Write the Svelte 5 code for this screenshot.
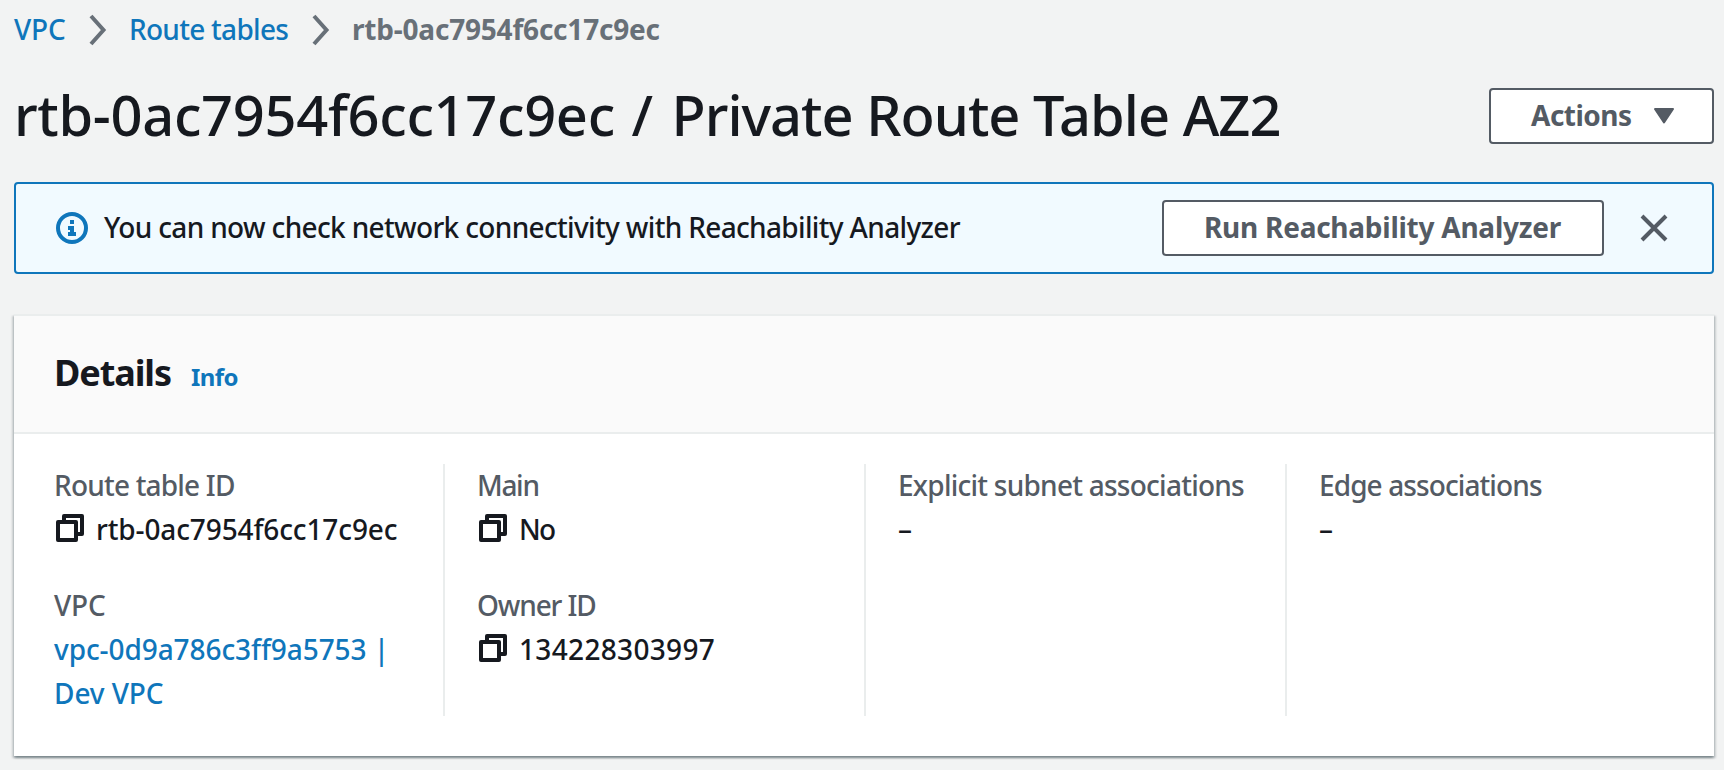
<script>
  const columns = [
    [
      { label: 'Route table ID', labelSpacing: -0.8, value: 'rtb-0ac7954f6cc17c9ec', spacing: -0.12, copy: true },
      { label: 'VPC', labelSpacing: -0.2, value: 'vpc-0d9a786c3ff9a5753 | Dev VPC', spacing: -0.08, link: true }
    ],
    [
      { label: 'Main', labelSpacing: -1.3, value: 'No', spacing: -1.8, copy: true },
      { label: 'Owner ID', labelSpacing: -1.15, value: '134228303997', spacing: 0.33, copy: true }
    ],
    [{ label: 'Explicit subnet associations', labelSpacing: -0.75, value: '–', spacing: 0 }],
    [{ label: 'Edge associations', labelSpacing: -0.9, value: '–', spacing: 0 }]
  ];
</script>

{#snippet chevron()}
  <svg class="chevron" width="18" height="32" viewBox="0 0 18 32" aria-hidden="true">
    <path d="M2 2 L14.5 16 L2 30" fill="none" stroke="#687078" stroke-width="4" />
  </svg>
{/snippet}

<main>
  <nav>
    <a href="#vpc" class="vpc">VPC</a>
    {@render chevron()}
    <a href="#tables" class="tables">Route tables</a>
    {@render chevron()}
    <span class="current">rtb-0ac7954f6cc17c9ec</span>
  </nav>

  <header>
    <h1><span class="id">rtb-0ac7954f6cc17c9ec</span><span class="slash">{' / '}</span><span class="name">Private Route Table AZ2</span></h1>
    <button class="btn actions">
      <span>Actions</span>
      <svg width="22" height="18" viewBox="0 0 22 18" aria-hidden="true">
        <path d="M2 2 H20 L11 15.5 Z" fill="#545b64" stroke="#545b64" stroke-width="2" stroke-linejoin="round" />
      </svg>
    </button>
  </header>

  <section class="alert">
    <svg class="info-icon" width="32" height="32" viewBox="0 0 32 32" aria-hidden="true">
      <circle cx="16" cy="16" r="14" fill="none" stroke="#0f76bb" stroke-width="4" />
      <path d="M14 8 H18 V12 H14 Z M12 14 H18 V20 H20 V24 H12 V20 H14 V18 H12 Z" fill="#0f76bb" />
    </svg>
    <p>You can now check network connectivity with Reachability Analyzer</p>
    <button class="btn run">Run Reachability Analyzer</button>
    <button class="close" aria-label="Dismiss">
      <svg width="28" height="28" viewBox="0 0 28 28" aria-hidden="true">
        <path d="M2 2 L26 26 M26 2 L2 26" fill="none" stroke="#545b64" stroke-width="4" />
      </svg>
    </button>
  </section>

  <section class="card">
    <div class="card-head">
      <h2>Details</h2>
      <a href="#info">Info</a>
    </div>
    <div class="grid">
      {#each columns as column}
        <div class="column">
          <dl>
            {#each column as field}
              <div class="field">
                <dt style="letter-spacing: {field.labelSpacing}px">{field.label}</dt>
                <dd style="letter-spacing: {field.spacing}px">
                  {#if field.copy}
                    <svg class="copy" width="28" height="28" viewBox="0 0 28 28" fill="none" stroke="#16191f" stroke-width="4" stroke-linejoin="round" aria-hidden="true">
                      <path d="M2 8 H20 V26 H2 Z" />
                      <path d="M8 7 V2 H26 V20 H21" />
                    </svg>
                  {/if}
                  {#if field.link}<a href="#value">{field.value}</a>{:else}<span>{field.value}</span>{/if}
                </dd>
              </div>
            {/each}
          </dl>
        </div>
      {/each}
    </div>
  </section>
</main>

<style>
  :global(body) {
    background: #f2f3f3;
  }
  main {
    box-sizing: border-box;
    width: 1724px;
    height: 770px;
    overflow: hidden;
    padding: 7px 10px 0 14px;
    background: #f2f3f3;
    color: #16191f;
    font: 500 28px/44px 'Noto Sans', 'Open Sans', sans-serif;
  }
  a {
    color: #0f76bb;
    text-decoration: none;
  }
  h1, h2, p, dl, dd {
    margin: 0;
  }
  svg {
    display: block;
    flex: none;
  }
  nav {
    display: flex;
    height: 45px;
    white-space: nowrap;
  }
  .vpc {
    width: 75px;
    letter-spacing: -0.2px;
  }
  .tables {
    width: 183px;
    letter-spacing: -0.72px;
  }
  .chevron {
    margin: 7px 22px 0 0;
  }
  .current {
    color: #687078;
    font-weight: 700;
    letter-spacing: -0.2px;
  }
  header {
    display: flex;
    justify-content: space-between;
    align-items: flex-start;
    padding-top: 36px;
    height: 94px;
  }
  h1 {
    margin-top: -10px;
    font-size: 56px;
    line-height: 72px;
    font-weight: 500;
    white-space: nowrap;
  }
  .id {
    letter-spacing: -0.33px;
  }
  .slash {
    letter-spacing: 2px;
    white-space: pre;
  }
  .name {
    letter-spacing: -1px;
  }
  .btn {
    box-sizing: border-box;
    height: 56px;
    border: 2px solid #545b64;
    border-radius: 4px;
    background: #fff;
    color: #545b64;
    font: 700 28px/50px 'Noto Sans', 'Open Sans', sans-serif;
    white-space: nowrap;
    padding: 0 0 2px 40px;
    text-align: left;
  }
  .actions {
    display: flex;
    width: 225px;
    letter-spacing: -0.5px;
  }
  .actions span {
    width: 122px;
  }
  .actions svg {
    margin-top: 17px;
  }
  .alert {
    box-sizing: border-box;
    display: flex;
    height: 92px;
    border: 2px solid #0f76bb;
    border-radius: 4px;
    background: #f1faff;
    padding: 16px 44px 0 40px;
  }
  .info-icon {
    margin-top: 12px;
  }
  p {
    flex: 1;
    margin: 5px 0 0 16px;
    letter-spacing: -0.66px;
    white-space: nowrap;
  }
  .run {
    width: 442px;
    letter-spacing: -0.25px;
  }
  .close {
    margin: 14px 0 0 36px;
    padding: 0;
    width: 28px;
    height: 28px;
    border: 0;
    background: none;
  }
  .card {
    box-sizing: border-box;
    height: 442px;
    margin-top: 40px;
    border-top: 2px solid #eaeded;
    background: #fff;
    box-shadow: 0 2px 2px 0 rgba(0, 28, 36, 0.3), 2px 2px 2px 0 rgba(0, 28, 36, 0.15), -2px 2px 2px 0 rgba(0, 28, 36, 0.15);
  }
  .card-head {
    box-sizing: border-box;
    display: flex;
    align-items: baseline;
    height: 118px;
    padding: 35px 40px 0;
    border-bottom: 2px solid #eaeded;
    background: #fafafa;
  }
  h2 {
    width: 137px;
    font-size: 36px;
    line-height: 44px;
    letter-spacing: -1.1px;
  }
  .card-head a {
    font-size: 24px;
    font-weight: 700;
    letter-spacing: -0.6px;
  }
  .grid {
    display: grid;
    grid-template-columns: 429px 421px 421px 1fr;
    grid-template-rows: 252px;
    padding-top: 30px;
  }
  .column {
    padding-left: 32px;
    border-left: 2px solid #eaeded;
  }
  .column:first-child {
    padding-left: 40px;
    border-left: 0;
  }
  dl {
    margin-top: -1px;
  }
  .field {
    margin-bottom: 32px;
  }
  dt {
    color: #545b64;
    white-space: nowrap;
  }
  dd {
    display: flex;
    max-width: 350px;
  }
  .copy {
    margin: 7px 12px 0 2px;
  }
</style>
